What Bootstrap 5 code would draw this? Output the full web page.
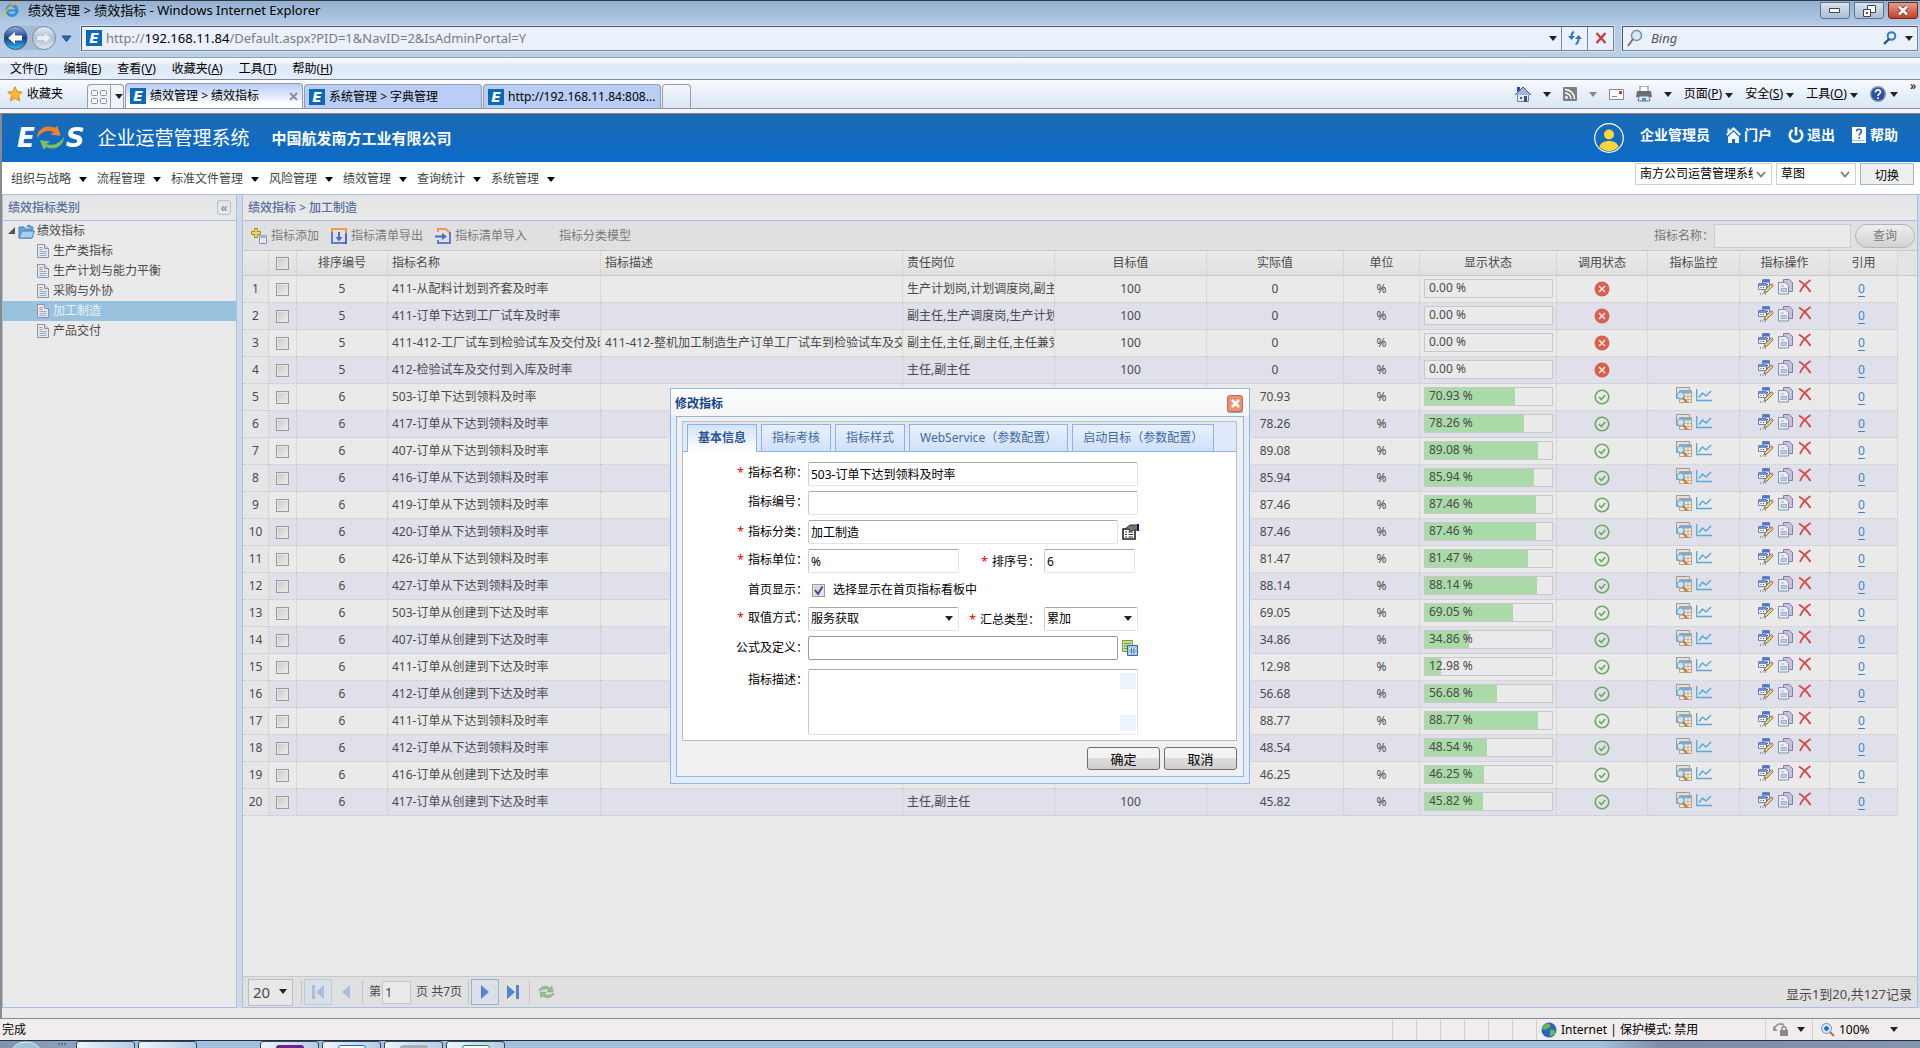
<!DOCTYPE html>
<html lang="zh-CN">
<head>
<meta charset="utf-8">
<meta name="viewport" content="width=device-width, initial-scale=1">
<title>绩效管理 &gt; 绩效指标</title>
<link href="https://cdn.jsdelivr.net/npm/bootstrap@5.3.0/dist/css/bootstrap.min.css" rel="stylesheet">
<style>
body{font-family:"Noto Sans","Noto Sans CJK SC",sans-serif;font-size:12px;line-height:16px;color:#000;background:#eaeaea;overflow:hidden}
svg{display:block;flex:none}
a{color:inherit;text-decoration:none}
button,input,select,textarea{font:inherit;color:inherit;border-radius:0}
button{background:none;border:0;padding:0}
.shell{height:100vh;min-height:600px}
.bg-title{background:linear-gradient(#94b0d0,#b4cbe6 24px,#b9d0ea);border-top:1px solid #33363b;height:57px;padding:0 2px 0 4px}
.title-row{height:18px;font-size:13px}
.addr-row{padding-top:6px}
.win-btn{width:30px;height:17px;border:1px solid #5f7490;border-radius:0 0 3px 3px;background:linear-gradient(#d7e3f0,#a9bdd6);display:flex;align-items:center;justify-content:center}
.win-close{background:linear-gradient(#e39c8c,#c43f26);border-color:#6b2a20}
.addr{height:25px;border:1px solid #76879b;background:#eaf1fa;outline:1px solid #d5e2f1;border-top-color:#48586b;border-left-color:#48586b}
.addr .ibox{width:26px;border-left:1px solid #76879b;height:100%}
.searchbox{width:296px}
.searchbox input{background:none;border:0;outline:0;font-style:italic;font-size:13px;min-width:0}
.searchbox input::placeholder{color:#555;opacity:1}
.url{font-size:13px;color:#7d7d7d}
.url b{font-weight:400;color:#000}
.fav{width:16px;height:16px;background:#0e69b4;color:#fff;font:italic bold 14px/16px "DejaVu Sans",sans-serif;text-align:center;flex:none}
.menu-bar{height:23px;background:linear-gradient(#fff,#f1f6fd 3px,#dfeaf7 8px,#e3eefa);border-top:1px solid #90a2b8;border-bottom:1px solid #80899a;padding-left:10px;gap:16px}
.tabs-row{height:29px;background:linear-gradient(#f9fbfe,#e3edf8 60%,#dce8f6);border-bottom:1px solid #8d94a3;padding-left:7px}
.br-tab{height:24px;width:178px;border:1px solid #989ca8;border-bottom:0;border-radius:4px 4px 0 0;background:#b9cdf6;padding:0 4px;margin-right:1px}
.br-tab.on{height:25px;background:linear-gradient(#b8ccf5,#fff 85%)}
.quick{height:24px;width:37px;border:1px solid #989ca8;border-bottom:0;border-radius:4px 4px 0 0;background:#f0f4fb;margin-right:1px}
.quick.blank{width:29px}
.quick span{border-right:1px solid #989ca8;width:23px;height:100%}
.cmds{gap:12px;padding-right:4px}
.car{width:0;height:0;border:4px solid transparent;border-top:5px solid #222;border-bottom:0;flex:none;display:inline-block}
.car.soft{border-top-color:#888}
.strip{height:5px;background:#f3f5fb;border-bottom:1px solid #848484}
.page{border-left:2px solid #8a8a8a;background:#eaeaea}
.brand{height:48px;background:linear-gradient(#1b6bb3,#0b6ac8);color:#fff;padding:0 22px 0 15px}
.logo{gap:1px;margin-right:13px}
.logo-t{font:italic bold 26px/26px "DejaVu Sans",sans-serif}
.sysname{font-size:19px;line-height:26px;margin-right:22px}
.corp{font-size:15px;font-weight:700;line-height:20px}
.user-links{font-size:14px;font-weight:700;gap:16px}
.user-links a{gap:3px;padding-bottom:6px}
.menu2{height:32px;background:#fff;padding:0 6px 0 9px;color:#444}
.menu2 nav{gap:10px;padding-top:2px}
.menu2 nav a{gap:8px}
.menu2 .car{border-top-color:#000}
.sel{appearance:none;background:#fff;border:1px solid #cfcfcf;height:22px;color:#000;padding:0 4px;width:100%;font-size:12px}
.selbox{position:relative}
.selbox svg,.selbox .car{position:absolute;right:6px;top:50%;margin-top:-3px;pointer-events:none}
.hdr-a{width:137px}.hdr-b{width:80px}
.hdr-a select{padding-right:18px;overflow:hidden}
.swap{width:54px;height:22px;border:1px solid #9cb8cc;background:#efefef;color:#000;padding-top:3px}
.work{border-top:1px solid #a9bfe0;background:#d0d9e8;gap:5px;color:#4a4a4a}
.side{width:235px;background:#eaeaea;border:solid #a9bfe0;border-width:0 1px 1px 1px}
.pane{background:#eaeaea;border:solid #a9bfe0;border-width:0 1px 1px 1px;margin-right:2px}
.pane-h{height:26px;background:linear-gradient(#e4e4e4,#eaeaea);border-bottom:1px solid #a9bfe0;color:#5470a0;padding:0 5px;font-weight:500}
.fold{width:14px;height:15px;border:1px solid #a9bfdc;border-radius:3px;color:#6f8db8;font-size:13px;line-height:11px}
.tree{margin:0;padding:0;list-style:none}
.tree li{height:20px;padding-left:33px;gap:3px}
.tree li.root{padding-left:4px;gap:2px}
.tree li.on{background:#98c2de;color:#eaf3fa}
.tools{height:30px;background:#e0e0e0;border-bottom:1px solid #c8c8c8;padding:0 2px 0 8px;color:#777}
.tools button{gap:4px;color:#7b7b7b}
.q-in{width:137px;height:24px;border:1px solid #ccc;background:#eaeaea}
.q-btn{width:60px;height:24px;border:1px solid #b5b5b5;border-radius:12px;background:linear-gradient(#eee,#d2d2d2)}
.grid{table-layout:fixed;width:100%;border-collapse:separate;border-spacing:0}
.grid th,.grid td{height:27px;padding:0 5px;border-right:1px dotted #c6c6c6;border-bottom:1px dotted #c6c6c6;white-space:nowrap;overflow:hidden;font-weight:400;text-align:center}
.grid th{height:25px;border-bottom:1px solid #c8c8c8;background:linear-gradient(#eaeaea,#e0e0e0)}
.grid .l{text-align:left;padding:0 0 0 4px}
.grid .n,.grid .n:first-child{background:#e6e6e6;padding:0}
.grid tr:nth-child(even) td{background:#e0e0ea}
.grid tr:nth-child(even) td.n{background:#e6e6e6}
.grid th:last-child,.grid tr td:last-child,.grid tr:nth-child(even) td:last-child{border:0;background:#eaeaea}
.grid th:last-child{border-bottom:1px solid #c8c8c8;background:#e4e4e4}
.ck{appearance:none;width:13px;height:13px;border:1px solid #9a9a9a;background:linear-gradient(135deg,#c9c9c9,#eee);box-shadow:inset 0 0 0 1px #e6e6e6;display:block;margin:0 auto}
.meter{height:19px;border:1px solid #c8c8c8;background:#eaeaea;position:relative;text-align:left;margin:0 -2px 1px -1px}
.meter i{display:block;height:100%;background:#a9daa7}
.meter span{position:absolute;left:4px;top:0}
.ref{color:#3e84c8;text-decoration:underline;text-underline-offset:3px;padding-right:4px}
.pager{height:31px;background:#e0e0e0;border-top:1px solid #c8c8c8;padding:0 5px}
.pager .sel{height:27px;width:45px;font-size:15px;color:#4a4a4a;border-color:#bdbdbd;background:#e8e8e8}
.pg{width:28px;height:26px;display:flex;align-items:center;justify-content:center;border:1px solid transparent}
.pg.box{border-color:#b9cbd6;background:#dbe0e6}
.pg.hot{border-color:#96b5cd}
.vr1{width:1px;height:24px;background:#c4c4c4;margin:0 2px}
.pg-in{width:29px;height:23px;border:1px solid #c6c6c6;background:#eaeaea;padding:0 2px;font-size:13px;margin:0 1px}
.tot{font-size:13px;padding-top:4px}
.gap-b{height:10px}
.status{height:22px;background:#f0edec;border-top:1px solid #8a8a8a;padding-left:2px}
.status .seg{border-left:1px solid #cfcfcf;height:20px;width:24px}
.status .zone{width:229px}.status .prot{width:47px}.status .zoomlv{width:108px}
.task{height:8px;background:linear-gradient(90deg,#7f92ab,#8ba2be 76px,#a3bfdf 80px,#a3bfdf 1600px,#7e8ea8 1660px,#8495ae);border-top:1px solid #23303f;overflow:hidden}
.task i{width:59px;height:12px;border:1px solid #33475d;border-radius:3px 3px 0 0;background:linear-gradient(90deg,#eef5fc,#b5cbe3);margin-right:3px;display:flex;justify-content:center;padding-top:3px}
.task b{width:28px;height:12px;border-radius:3px}
.task b.oe{background:#71228f}.task b.gr{background:#a9b0b5}
.layer{position:absolute;inset:388px 0 auto 0}
.dlg{width:580px;border:1px solid #93b6e2;background:#e3ecfb;padding:0 5px 6px}
.dlg-h{height:27px;color:#15428b;font-weight:700;background:linear-gradient(#fdfdfd,#f5f5f5);margin:0 -5px;padding:2px 6px 0 4px}
.dlg-x{width:16px;height:17px;border:1px solid #c46c50;border-radius:3px;background:#ea9173;box-shadow:0 1px #7fa0cf;display:flex;align-items:center;justify-content:center}
.dlg-in{border:1px solid #93b6e2;background:#f0f0f0;padding:4px 6px 6px 5px}
.tabpanel{border:1px solid #bdbdbd;background:#fff}
.dtabs{height:30px;background:#dfe9fb;border-bottom:1px solid #8db2e3;padding:2px 4px 0;gap:4px}
.dtabs .nav-link{height:27px;border:1px solid #8db2e3;border-bottom:0;border-radius:0;padding:0 10px;font-size:12px;line-height:26px;color:#416aa3;background:linear-gradient(#e9f1fd,#cfe0f8)}
.dtabs .nav-link.active{height:28px;font-weight:700;color:#2a5596;background:linear-gradient(#d5e3f8,#fff)}
.form{padding:10px 0 5px}
.fr{height:24px;margin-bottom:5px}
.fl{width:125px;text-align:right;line-height:22px;flex:none}
.fl em,.mid em{color:#e00;font-style:normal;margin-right:4px}
.fi{border:1px solid #e0e3ea;border-top-color:#a5a8ad;border-left-color:#c9ccd2;height:24px;border-radius:2px;padding:0 2px;background:#fff;width:330px}
.w-md{width:310px}.w-sm{width:151px}.w-xs{width:91px}.w-s2{width:94px}
.dk{border-color:#9c9c9c}
.fi.sel{width:100%}
.mid{line-height:25px;text-align:right;width:85px;padding-right:4px}
.form textarea{height:66px;resize:none}
.ta{position:relative}
.ta i{position:absolute;right:2px;width:16px;height:16px;background:#edf3fd}
.foot{padding-top:6px}
.okb{width:73px;height:23px;border:1px solid #707070;border-radius:3px;background:linear-gradient(#f4f4f4 45%,#dcdcdc 50%,#cfcfcf);font-size:13px}
</style>
<script src="https://cdn.jsdelivr.net/npm/bootstrap@5.3.0/dist/js/bootstrap.bundle.min.js"></script>
</head>
<body>
<svg width="0" height="0" class="position-absolute">
<symbol id="i-bad" viewBox="0 0 16 16"><circle cx="8" cy="8" r="7.5" fill="#d9604f"/><path d="M5 5l6 6M11 5l-6 6" stroke="#f5e6e4" stroke-width="1.6"/></symbol>
<symbol id="i-ok" viewBox="0 0 16 16"><circle cx="8" cy="8" r="6.8" fill="none" stroke="#6aab5f" stroke-width="1.6"/><path d="M5 8l2.400 2.500L11.200 6" fill="none" stroke="#6aab5f" stroke-width="1.6"/></symbol>
<symbol id="i-mon" viewBox="0 0 16 16"><path d="M.5.5h13v11H.5z" fill="#e4e0da" stroke="#9a9a9a"/><path d="M3.500 3.500h12v12h-12z" fill="#f0e9dd" stroke="#b3a489"/><path d="M4 4h11v2.500H4z" fill="#74aee0"/><path d="M4 9.500h11M4 12.500h11M8.500 6v9M12 6v9" stroke="#c5b79f"/><circle cx="4.500" cy="8.500" r="3.400" fill="#c7e4f6" stroke="#6ba5d2"/><path d="M7 11l4 4.500" stroke="#c8792e" stroke-width="2"/></symbol>
<symbol id="i-line" viewBox="0 0 16 14"><path d="M.7 1v11.500H16" fill="none" stroke="#5aa9d6" stroke-width="1.300"/><path d="M3 9.500L6.500 5l3.500 3 5-5" fill="none" stroke="#5aa9d6" stroke-width="1.500"/></symbol>
<symbol id="i-edit" viewBox="0 0 16 16"><path d="M4.500.5h7v7h-7z" fill="#e8ecf6" stroke="#6b83b8"/><path d="M5 1h6v2.500H5z" fill="#4d78d0"/><path d="M.5 4.500h8v6h-8z" fill="#f4f4f8" stroke="#6b83b8"/><path d="M1 5h7v2H1z" fill="#6a90dc"/><path d="M2.500 8.500h1M5 8.500h1M9 5.500h1" stroke="#445"/><path d="M6 14l1-3 6-6 2 2-6 6z" fill="#e6cf7a" stroke="#6f6140" stroke-width=".8"/><path d="M12.500 5.500l1.300-1.300 2 2-1.300 1.300z" fill="#d98074"/><path d="M2 15h1M4.500 15h1M7 15h1" stroke="#555"/></symbol>
<symbol id="i-copy" viewBox="0 0 16 16"><path d="M5.500.5h6l3 3v9h-9z" fill="#cbbfdd" stroke="#8a79a8"/><path d="M.5 3.500h7l3 3v8.500H.5z" fill="#e9edf4" stroke="#8592ad"/><path d="M3 7h3M3 9.500h5.500v3H3z" stroke="#9fb0cc" fill="#c2cde2"/></symbol>
<symbol id="i-del" viewBox="0 0 14 14"><path d="M1 1.500C5 4 10 9 12.500 13" fill="none" stroke="#d94848" stroke-width="2"/><path d="M12.500 1C8 4 4 8 2 13" fill="none" stroke="#d94848" stroke-width="1.800"/></symbol>
<symbol id="i-doc" viewBox="0 0 12 14"><path d="M.5.5h7l4 4v9H.5z" fill="#e4e8f1" stroke="#8793aa"/><path d="M7.500.5v4h4" fill="#cfd7e6" stroke="#8793aa"/><path d="M2.500 3.500h3M2.500 5.500h3" stroke="#df8468"/><path d="M2.500 7.500h7M2.500 9.500h7M2.500 11.500h7" stroke="#9aa9c6"/></symbol>
<symbol id="i-chev" viewBox="0 0 10 7"><path d="M1 1l4 4.500L9 1" fill="none" stroke="#777" stroke-width="1.800"/></symbol>
<symbol id="i-ie" viewBox="0 0 16 16"><circle cx="8" cy="8.500" r="5" fill="none" stroke="#2f8fdb" stroke-width="3"/><path d="M4 8.500h9" stroke="#2f8fdb" stroke-width="2"/><path d="M1 14.500C-1 10 9 0 15.500 1.500" fill="none" stroke="#f1b62f" stroke-width="1.600"/></symbol>
</svg>

<div class="shell d-flex flex-column">
<header class="bg-title flex-shrink-0">
  <div class="title-row d-flex align-items-center gap-2">
    <svg width="16" height="16"><use href="#i-ie"/></svg>
    <span class="flex-grow-1">绩效管理 &gt; 绩效指标 - Windows Internet Explorer</span>
    <div class="d-flex gap-1 align-self-end">
      <button class="win-btn" aria-label="最小化"><svg width="12" height="6"><path d="M.5.5h10v4H.5z" fill="#fff" stroke="#444"/></svg></button>
      <button class="win-btn" aria-label="还原"><svg width="13" height="12"><path d="M4.500.5h8v7h-8z" fill="#fff" stroke="#444"/><path d="M.5 4.500h7v7h-7z" fill="#fff" stroke="#444"/><path d="M3 7h2v2H3z" fill="#555"/></svg></button>
      <button class="win-btn win-close" aria-label="关闭窗口"><svg width="12" height="11"><path d="M2 1.500l8 8M10 1.500l-8 8" stroke="#633" stroke-width="4"/><path d="M2 1.500l8 8M10 1.500l-8 8" stroke="#fff" stroke-width="2.600"/></svg></button>
    </div>
  </div>
  <div class="addr-row d-flex align-items-center gap-2">
    <svg width="69" height="26" viewBox="0 0 69 26"><defs><linearGradient id="ob" x2="0" y2="1"><stop offset="0" stop-color="#8fb4e2"/><stop offset=".5" stop-color="#123f8e"/><stop offset="1" stop-color="#37c0f2"/></linearGradient><linearGradient id="og" x2="0" y2="1"><stop offset="0" stop-color="#e4ebf3"/><stop offset=".5" stop-color="#b3c1d2"/><stop offset="1" stop-color="#dfe9f4"/></linearGradient></defs><path d="M12 1h28v24H12z" fill="#a5bad5"/><circle cx="11.500" cy="13" r="11.500" fill="url(#ob)" stroke="#456"/><path d="M4 13l7-6v3.500h7v5h-7V19z" fill="#fff"/><circle cx="40" cy="13" r="11.500" fill="url(#og)" stroke="#7488a1"/><path d="M47 13l-7-6v3.500h-7v5h7V19z" fill="#e8eef5" stroke="#b9c6d6"/><path d="M58 11h9l-4.500 5.500z" fill="#2e6aa8" stroke="#1d4878"/></svg>
    <div class="addr d-flex align-items-center flex-grow-1">
      <span class="fav ms-1 me-1">E</span><span class="url flex-grow-1">http://<b>192.168.11.84</b>/Default.aspx?PID=1&amp;NavID=2&amp;IsAdminPortal=Y</span>
      <span class="car me-1"></span>
      <button class="ibox d-flex align-items-center justify-content-center" aria-label="刷新"><svg width="14" height="14"><path d="M6 1C3.500 1.500 3.500 4 3.500 6" fill="none" stroke="#3274bd" stroke-width="2"/><path d="M0 5h7L3.500 9zM7 8h7l-3.500-4z" fill="#3274bd"/><path d="M10.500 7.500c0 3-.5 5-3 5.500" fill="none" stroke="#3274bd" stroke-width="2"/></svg></button>
      <button class="ibox d-flex align-items-center justify-content-center" aria-label="停止"><svg width="12" height="12"><path d="M1.500 1l9 10M10.500 1l-9 10" stroke="#cc3d3d" stroke-width="2.400"/></svg></button>
    </div>
    <div class="addr searchbox d-flex align-items-center px-1 gap-2">
      <svg width="16" height="18"><circle cx="9.500" cy="6.500" r="5" fill="#d7e9f7" stroke="#7c8fa5" stroke-width="1.500"/><path d="M6 10l-5 7" stroke="#777" stroke-width="2"/></svg>
      <input class="flex-grow-1 p-0" aria-label="搜索" placeholder="Bing">
      <svg width="14" height="14"><circle cx="8.500" cy="5" r="3.800" fill="none" stroke="#2f78bd" stroke-width="2"/><path d="M6 8l-5 5" stroke="#234f91" stroke-width="2.400"/></svg><span class="car"></span>
    </div>
  </div>
</header>
<nav class="menu-bar d-flex align-items-center flex-shrink-0">
  <a href="#">文件(<u>F</u>)</a><a href="#">编辑(<u>E</u>)</a><a href="#">查看(<u>V</u>)</a><a href="#">收藏夹(<u>A</u>)</a><a href="#">工具(<u>T</u>)</a><a href="#">帮助(<u>H</u>)</a>
</nav>
<div class="tabs-row d-flex align-items-end flex-shrink-0">
  <a href="#" class="d-flex align-items-center gap-1 align-self-center me-4"><svg width="16" height="16"><path d="M8 .8l2.200 4.700 5 .6-3.700 3.500 1 5.200L8 12.300l-4.500 2.500 1-5.200L.8 6.100l5-.6z" fill="#f9b932" stroke="#d98a1b"/></svg>收藏夹</a>
  <span class="quick d-flex align-items-center gap-1"><span class="d-flex align-items-center justify-content-center"><svg width="16" height="14" fill="#fff" stroke="#8b93a3"><rect x=".5" y=".5" width="6" height="5" rx="1"/><rect x="9.500" y=".5" width="6" height="5" rx="1"/><rect x=".5" y="8.500" width="6" height="5" rx="1"/><rect x="9.500" y="8.500" width="6" height="5" rx="1"/></svg></span><i class="car"></i></span>
  <a href="#" class="br-tab on d-flex align-items-center gap-1"><span class="fav">E</span><span class="flex-grow-1">绩效管理 &gt; 绩效指标</span><svg width="9" height="9"><path d="M1 1l7 7M8 1L1 8" stroke="#8a8f9c" stroke-width="2"/></svg></a>
  <a href="#" class="br-tab d-flex align-items-center gap-1"><span class="fav">E</span>系统管理 &gt; 字典管理</a>
  <a href="#" class="br-tab d-flex align-items-center gap-1"><span class="fav">E</span>http://192.168.11.84:808...</a>
  <span class="quick blank bg-transparent"></span>
  <div class="cmds d-flex align-items-center ms-auto align-self-center">
    <svg width="16" height="16"><path d="M2.500 8.500h11v7h-11z" fill="#e4e7ee" stroke="#777f92"/><path d="M0 9l8-8 8 8" fill="#9fb4de" stroke="#46557a"/><path d="M2 1h3v3l-3 2z" fill="#2944b4"/><path d="M5 11h2v2H5z" fill="#557"/><path d="M9 10h3v6H9z" fill="#3c4e7c"/></svg><i class="car"></i>
    <svg width="14" height="14"><rect width="14" height="14" rx="1" fill="#808080"/><circle cx="3.500" cy="10.500" r="1.400" fill="#fff"/><path d="M2 6a6 6 0 016 6M2 2.500A9.500 9.500 0 0111.500 12" fill="none" stroke="#fff" stroke-width="1.500"/></svg><i class="car soft"></i>
    <svg width="15" height="11"><path d="M.5.5h14v10H.5z" fill="#fff" stroke="#888"/><path d="M10 2h3v3h-3z" fill="#d33"/><path d="M3 7.500h5" stroke="#888"/></svg>
    <svg width="16" height="16"><path d="M4 0h8v6H4z" fill="#fff" stroke="#777"/><path d="M1 5h14l1 6H0z" fill="#6c6c70"/><path d="M3 10h10l1 5H2z" fill="#dfe7f2" stroke="#777"/><path d="M6 12h4v3H6z" fill="#3a9ec7"/></svg><i class="car"></i>
    <a href="#">页面(<u>P</u>) <i class="car"></i></a><a href="#">安全(<u>S</u>) <i class="car"></i></a><a href="#">工具(<u>O</u>) <i class="car"></i></a>
    <a href="#" class="d-flex align-items-center gap-1" aria-label="帮助"><svg width="16" height="16"><circle cx="8" cy="8" r="7.300" fill="#2b51a3" stroke="#8d94a8" stroke-width="1.400"/><path d="M5.500 6.500c0-3.500 5-3.500 5-.5 0 2-2.500 1.800-2.500 4M8 11.300v1.700" fill="none" stroke="#fff" stroke-width="1.700"/></svg><i class="car"></i></a>
    <span class="pb-3">»</span>
  </div>
</div>
<div class="strip flex-shrink-0"></div>

<div class="page d-flex flex-column flex-grow-1">
  <div class="brand d-flex align-items-center">
    <span class="logo d-flex align-items-center"><span class="logo-t">E</span>
      <svg width="29" height="26" viewBox="0 0 27 24"><path d="M1 12C1 4 9-1 17 2.500l3-1.500 3 9-9.500-1 3-2.500C11 4 5 6 1 12z" fill="#f0802c"/><path d="M26 11c0 8-8 13-16 9.500L7 22.500 3.500 14l9.500 1-3 2.500C15 20 22 17 26 11z" fill="#7cc05c"/></svg>
      <span class="logo-t">S</span></span>
    <span class="sysname">企业运营管理系统</span>
    <span class="corp flex-grow-1">中国航发南方工业有限公司</span>
    <div class="user-links d-flex align-items-center">
      <svg width="30" height="30"><circle cx="15" cy="15" r="14.300" fill="none" stroke="#fff" stroke-width="1.200"/><circle cx="15" cy="11.500" r="5" fill="#fcd639"/><path d="M5.500 24c1-8 18-8 19 0-5 5.500-14 5.500-19 0z" fill="#fcd639"/></svg>
      <a href="#">企业管理员</a>
      <a href="#" class="d-flex align-items-center"><svg width="15" height="16" fill="none" stroke="#fff"><path d="M.7 8L7.500 1.500 14.300 8" stroke-width="2"/><path d="M2 10l5.500-5.500L13 10v6H9v-4H6v4H2z" fill="#fff" stroke="none"/><path d="M2.500 5V1.500" stroke-width="2"/></svg>门户</a>
      <a href="#" class="d-flex align-items-center"><svg width="16" height="16" fill="none" stroke="#fff" stroke-width="2.600"><path d="M4.500 3A6.300 6.300 0 1011.500 3M8 0v8.500"/></svg>退出</a>
      <a href="#" class="d-flex align-items-center"><svg width="16" height="16"><path d="M1 0h14v16H1z" fill="#fff"/><path d="M1 13.500h12" stroke="#9dc3e8"/><path d="M5.500 4.500c0-3 5-3 5 0 0 1.800-2.300 1.800-2.300 4M8.200 10v1.800" fill="none" stroke="#2b5d9c" stroke-width="1.600"/></svg>帮助</a>
    </div>
  </div>
  <div class="menu2 d-flex align-items-center justify-content-between">
    <nav class="d-flex" id="mainMenu"></nav>
    <div class="d-flex align-items-start gap-1 pb-2">
      <div class="selbox hdr-a"><select class="sel" aria-label="系统"><option>南方公司运营管理系统</option></select><svg width="10" height="7"><use href="#i-chev"/></svg></div>
      <div class="selbox hdr-b"><select class="sel" aria-label="版本"><option>草图</option></select><svg width="10" height="7"><use href="#i-chev"/></svg></div>
      <button class="swap">切换</button>
    </div>
  </div>
  <div class="work d-flex flex-grow-1">
    <aside class="side flex-shrink-0">
      <div class="pane-h d-flex align-items-center justify-content-between">绩效指标类别<button class="fold" aria-label="折叠">«</button></div>
      <ul class="tree">
        <li class="root d-flex align-items-center"><svg width="9" height="8"><path d="M8 0v7H1z" fill="#555"/></svg><svg width="17" height="15"><path d="M1 3h5l1 2h7v9H1z" fill="#6ea5dd" stroke="#4d7fb9"/><path d="M4 7h12.500L14 14H1z" fill="#a8cff2" stroke="#4d7fb9"/><path d="M8 3c1-3 5-3 6 0l1.500-1v4h-4L13 4" fill="#5a9ad8"/></svg>绩效指标</li>
        <li class="d-flex align-items-center"><svg width="14" height="14"><use href="#i-doc"/></svg>生产类指标</li>
        <li class="d-flex align-items-center"><svg width="14" height="14"><use href="#i-doc"/></svg>生产计划与能力平衡</li>
        <li class="d-flex align-items-center"><svg width="14" height="14"><use href="#i-doc"/></svg>采购与外协</li>
        <li class="d-flex align-items-center on"><svg width="14" height="14"><use href="#i-doc"/></svg>加工制造</li>
        <li class="d-flex align-items-center"><svg width="14" height="14"><use href="#i-doc"/></svg>产品交付</li>
      </ul>
    </aside>
    <main class="pane d-flex flex-column flex-grow-1">
      <div class="pane-h d-flex align-items-center">绩效指标 &gt; 加工制造</div>
      <div class="tools d-flex align-items-center">
        <button class="d-flex align-items-center me-2"><svg width="16" height="16"><path d="M3.500.5h3v3h3v3h-3v3h-3v-3h-3v-3h3z" fill="#ead65e" stroke="#a58b2e"/><path d="M8.500 7.500h7v8h-7z" fill="#fff" stroke="#7991c0"/><path d="M9 8h6v2H9zM10 12h4M10 14h4" fill="#86a7e0" stroke="#b9c5dd"/></svg>指标添加</button>
        <button class="d-flex align-items-center ms-1 me-2 pe-1"><svg width="16" height="16" fill="none" stroke-width="2"><path d="M4 15H1V4" stroke="#5a7ed0"/><path d="M1 4V1h14v4" stroke="#ee9a55"/><path d="M15 5v10h-3M8 4v8" stroke="#4a6cc4"/><path d="M4.500 9h7L8 13.500z" fill="#4a6cc4" stroke="none"/><path d="M4 15h8" stroke="#5a7ed0"/></svg>指标清单导出</button>
        <button class="d-flex align-items-center me-4"><svg width="16" height="16" fill="none" stroke-width="2"><path d="M3 4V1h8l4 4" stroke="#ee9a55"/><path d="M15 4v11H3v-3" stroke="#5a7ed0"/><path d="M0 8.500h8" stroke="#4a6cc4"/><path d="M7 5l5 3.500L7 12z" fill="#4a6cc4" stroke="none"/></svg>指标清单导入</button>
        <button class="ms-2">指标分类模型</button>
        <label class="ms-auto" for="q">指标名称：</label><input id="q" class="q-in me-1"><button class="q-btn">查询</button>
      </div>
      <div class="flex-grow-1">
      <table class="grid">
        <colgroup><col style="width:26px"><col style="width:28px"><col style="width:91px"><col style="width:213px"><col><col style="width:152px"><col style="width:152px"><col style="width:137px"><col style="width:76px"><col style="width:137px"><col style="width:91px"><col style="width:92px"><col style="width:90px"><col style="width:68px"><col style="width:19px"></colgroup>
        <thead><tr><th></th><th><input type="checkbox" class="ck" aria-label="全选"></th><th>排序编号</th><th class="l">指标名称</th><th class="l">指标描述</th><th class="l">责任岗位</th><th>目标值</th><th>实际值</th><th>单位</th><th>显示状态</th><th>调用状态</th><th>指标监控</th><th>指标操作</th><th>引用</th><th></th></tr></thead>
        <tbody id="rows"></tbody>
      </table>
      </div>
      <div class="pager d-flex align-items-center">
        <div class="selbox"><select class="sel" aria-label="每页条数"><option>20</option></select><i class="car"></i></div>
        <span class="vr1 ms-2"></span>
        <button class="pg box" aria-label="首页"><svg width="12" height="14"><path d="M0 0h3v14H0zM12 0v14L4 7z" fill="#a9bede"/></svg></button>
        <button class="pg" aria-label="上一页"><svg width="8" height="14"><path d="M8 0v14L0 7z" fill="#a9bede"/></svg></button>
        <span class="vr1"></span>
        <label for="pn" class="ps-1">第</label><input id="pn" class="pg-in" value="1"><span class="px-1">页 共7页</span>
        <span class="vr1"></span>
        <button class="pg box hot" aria-label="下一页"><svg width="8" height="14"><path d="M0 0v14l8-7z" fill="#5683d8"/></svg></button>
        <button class="pg" aria-label="末页"><svg width="12" height="14"><path d="M12 0H9v14h3zM0 0v14l8-7z" fill="#5683d8"/></svg></button>
        <span class="vr1"></span>
        <button class="pg" aria-label="重新加载"><svg width="17" height="14"><path d="M1 6c1-5 8-6 11-3l2-2 1 6H9l1.500-2C8 3 4 4 1 6z" fill="#94bd90" stroke="#7dab79" stroke-width=".6"/><path d="M16 8c-1 5-8 6-11 3l-2 2-1-6h6l-1.500 2C9 11 13 10 16 8z" fill="#94bd90" stroke="#7dab79" stroke-width=".6"/></svg></button>
        <span class="ms-auto tot">显示1到20,共127记录</span>
      </div>
    </main>
  </div>
  <div class="gap-b"></div>
</div>

<footer class="status d-flex align-items-center flex-shrink-0">
  <span class="flex-grow-1">完成</span>
  <span class="seg"></span><span class="seg"></span><span class="seg"></span><span class="seg"></span><span class="seg"></span><span class="seg"></span>
  <span class="seg zone d-flex align-items-center ps-1 gap-1"><svg width="16" height="16"><circle cx="8" cy="8" r="7.500" fill="#2c62c4"/><path d="M3 3c3-2 5-2 6 0s-1 3-3 4-4 1-5 0zM9 8c3-1 5 0 5.500 2S11 14 9 14z" fill="#64bb4a"/></svg>Internet | 保护模式: 禁用</span>
  <span class="seg prot d-flex align-items-center justify-content-center gap-2"><svg width="16" height="15"><path d="M1 7c2-5 6-6 10-4" fill="none" stroke="#999" stroke-width="2"/><path d="M0 4v5h5z" fill="#999"/><path d="M7 8h8v6H7z" fill="#888"/><path d="M9 8V6q2-3 4 0v2" fill="none" stroke="#888" stroke-width="1.500"/></svg><i class="car"></i></span>
  <span class="seg zoomlv d-flex align-items-center ps-2 gap-1"><svg width="14" height="14"><circle cx="5.500" cy="5.500" r="5" fill="#d4e8fa" stroke="#6a90bd"/><path d="M5.500 3v5M3 5.500h5" stroke="#1c5fc0" stroke-width="2"/><path d="M9 9l4 4" stroke="#a07a4a" stroke-width="2"/></svg>100% <i class="car ms-3"></i></span>
</footer>
<div class="task d-flex flex-shrink-0 ps-2"><svg width="68" height="8"><ellipse cx="18" cy="12" rx="15" ry="11" fill="#9fc3d8" stroke="#e0eef7"/><path d="M50 3h8" stroke="#444" stroke-dasharray="2 1"/></svg><i></i><i></i><span class="ps-5 pe-2 me-1"></span><i><b class="oe"></b></i><i><b class="bg-white border border-primary"></b></i><i><b class="gr"></b></i><i><b class="bg-white border border-success"></b></i></div>
</div>

<div class="layer d-flex justify-content-center">
<section class="dlg" role="dialog" aria-labelledby="dt">
  <div class="dlg-h d-flex align-items-center justify-content-between"><span id="dt">修改指标</span><button class="dlg-x" aria-label="关闭"><svg width="9" height="9"><path d="M1 1l7 7M8 1L1 8" stroke="#fff" stroke-width="2.600"/></svg></button></div>
  <div class="dlg-in">
    <div class="tabpanel">
      <div class="dtabs nav flex-nowrap">
        <a class="nav-link active" href="#">基本信息</a><a class="nav-link" href="#">指标考核</a><a class="nav-link" href="#">指标样式</a><a class="nav-link" href="#">WebService（参数配置）</a><a class="nav-link" href="#">启动目标（参数配置）</a>
      </div>
      <form class="form">
        <div class="fr d-flex"><label class="fl" for="f1"><em>*</em>指标名称：</label><input id="f1" class="fi" value="503-订单下达到领料及时率"></div>
        <div class="fr d-flex"><label class="fl" for="f2">指标编号：</label><input id="f2" class="fi"></div>
        <div class="fr d-flex align-items-center"><label class="fl" for="f3"><em>*</em>指标分类：</label><input id="f3" class="fi w-md" value="加工制造"><svg class="ms-1" width="17" height="16"><path d="M1 5h12v10H1z" fill="#fff" stroke="#222" stroke-width="1.600"/><path d="M3 8h2M3 10.500h2M3 13h2M6.500 8H11M6.500 10.500H11M6.500 13H11" stroke="#333"/><path d="M3 5l5-4h8v5h-5L8 8 7 5z" fill="#777" stroke="#333"/><path d="M15 0h2v7h-2z" fill="#14146a"/></svg></div>
        <div class="fr d-flex"><label class="fl" for="f4"><em>*</em>指标单位：</label><input id="f4" class="fi w-sm" value="%"><label class="mid" for="f5"><em>*</em>排序号：</label><input id="f5" class="fi w-xs" value="6"></div>
        <div class="fr d-flex align-items-center"><span class="fl">首页显示：</span><span class="position-relative ms-1"><input type="checkbox" class="ck" id="f6" checked><svg class="position-absolute top-0 end-0" width="13" height="13" pointer-events="none"><path d="M3 6l3 4 4.500-7.500" fill="none" stroke="#3a4f96" stroke-width="2"/></svg></span><label class="ms-2" for="f6">选择显示在首页指标看板中</label></div>
        <div class="fr d-flex"><label class="fl" for="f7"><em>*</em>取值方式：</label><div class="selbox w-sm"><select id="f7" class="fi sel"><option>服务获取</option></select><i class="car"></i></div><label class="mid" for="f8"><em>*</em>汇总类型：</label><div class="selbox flex-shrink-0 w-s2"><select id="f8" class="fi sel"><option>累加</option></select><i class="car"></i></div></div>
        <div class="fr d-flex align-items-center"><label class="fl" for="f9">公式及定义：</label><input id="f9" class="fi w-md dk"><svg class="ms-1" width="16" height="16"><path d="M.5.5h10v11H.5z" fill="#c7dc9c" stroke="#7c9d3c"/><path d="M2 3.500h7M2 6h3M2 8.500h3" stroke="#7c9d3c"/><path d="M5.500 5.500h10v10h-10z" fill="#a6c8f0" stroke="#2f66a8"/><path d="M7 8h7v6H7z" fill="#eef5fd"/><path d="M7 10h7M7 12h7M9.500 8v6M12 8v6" stroke="#4b83c6"/></svg></div>
        <div class="d-flex pt-1"><label class="fl" for="f10">指标描述：</label><div class="ta"><textarea id="f10" class="fi d-block"></textarea><i class="top-0 mt-1"></i><i class="bottom-0 mb-1"></i></div></div>
      </form>
    </div>
    <div class="foot d-flex justify-content-end gap-1"><button class="okb" type="button">确定</button><button class="okb" type="button">取消</button></div>
  </div>
</section>
</div>

<script>
document.getElementById('mainMenu').innerHTML=['组织与战略','流程管理','标准文件管理','风险管理','绩效管理','查询统计','系统管理']
  .map(t=>`<a href="#" class="d-flex align-items-center">${t}<i class="car"></i></a>`).join('');
const L='订单从下达到领料及时率',C='订单从创建到下达及时率',Z='主任,副主任';
const data=[
 ['411-从配料计划到齐套及时率','','生产计划岗,计划调度岗,副主任',0],
 ['411-订单下达到工厂试车及时率','','副主任,生产调度岗,生产计划岗',0],
 ['411-412-工厂试车到检验试车及交付及时率','411-412-整机加工制造生产订单工厂试车到检验试车及交付及时率','副主任,主任,副主任,主任兼党支部书记',0],
 ['412-检验试车及交付到入库及时率','',Z,0],
 ['503-订单下达到领料及时率','',Z,70.93],['417-'+L,'',Z,78.26],['407-'+L,'',Z,89.08],['416-'+L,'',Z,85.94],
 ['419-'+L,'',Z,87.46],['420-'+L,'',Z,87.46],['426-'+L,'',Z,81.47],['427-'+L,'',Z,88.14],
 ['503-'+C,'',Z,69.05],['407-'+C,'',Z,34.86],['411-'+C,'',Z,12.98],['412-'+C,'',Z,56.68],
 ['411-'+L,'',Z,88.77],['412-'+L,'',Z,48.54],['416-'+C,'',Z,46.25],['417-'+C,'',Z,45.82]];
const ic=(n,w,h)=>`<svg width="${w}" height="${h}"><use href="#${n}"/></svg>`;
document.getElementById('rows').innerHTML=data.map(([n,d,p,v],i)=>`<tr><td class="n">${i+1}</td><td><input type="checkbox" class="ck" aria-label="选择第${i+1}行"></td><td>${i<4?5:6}</td><td class="l">${n}</td><td class="l">${d}</td><td class="l">${p}</td><td>100</td><td>${v||0}</td><td>%</td>
<td><div class="meter"><i style="width:${v}%"></i><span>${v.toFixed(2)} %</span></div></td>
<td><div class="d-flex justify-content-center">${v?ic('i-ok',16,16):ic('i-bad',16,16)}</div></td>
<td><div class="d-flex justify-content-center align-items-center gap-1 pb-1">${v?ic('i-mon',16,16)+ic('i-line',16,14):''}</div></td>
<td><div class="d-flex justify-content-center gap-1 pb-1">${ic('i-edit',16,16)}${ic('i-copy',16,16)}${ic('i-del',14,14)}</div></td>
<td><a href="#" class="ref">0</a></td><td></td></tr>`).join('');
</script>
</body>
</html>
